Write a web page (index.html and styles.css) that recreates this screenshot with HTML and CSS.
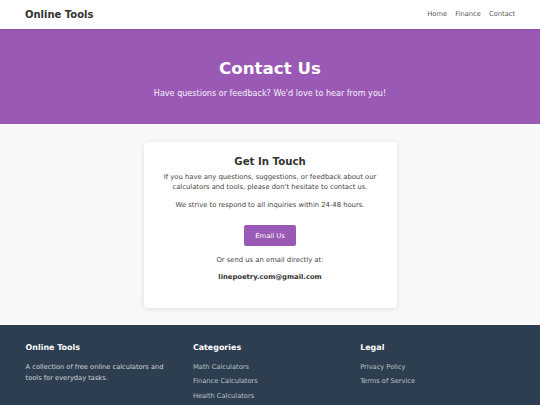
FILE: index.html
```html
<!DOCTYPE html>
<html lang="en">
<head>
<meta charset="utf-8">
<title>Contact Us - Online Tools</title>
<link rel="stylesheet" href="styles.css">
</head>
<body>
<header class="site-header">
  <div class="logo">Online Tools</div>
  <nav class="nav">
    <a href="#">Home</a>
    <a href="#">Finance</a>
    <a href="#">Contact</a>
  </nav>
</header>
<section class="hero">
  <h1>Contact Us</h1>
  <p>Have questions or feedback? We'd love to hear from you!</p>
</section>
<main class="main">
  <div class="card">
    <h2>Get In Touch</h2>
    <p class="intro">If you have any questions, suggestions, or feedback about our calculators and tools, please don't hesitate to contact us.</p>
    <p class="note">We strive to respond to all inquiries within 24-48 hours.</p>
    <a class="btn" href="#">Email Us</a>
    <p class="or">Or send us an email directly at:</p>
    <p class="email">linepoetry.com@gmail.com</p>
  </div>
</main>
<footer class="footer">
  <div class="footer-grid">
    <div class="col">
      <h3>Online Tools</h3>
      <p>A collection of free online calculators and tools for everyday tasks.</p>
    </div>
    <div class="col">
      <h3>Categories</h3>
      <ul>
        <li><a href="#">Math Calculators</a></li>
        <li><a href="#">Finance Calculators</a></li>
        <li><a href="#">Health Calculators</a></li>
      </ul>
    </div>
    <div class="col">
      <h3>Legal</h3>
      <ul>
        <li><a href="#">Privacy Policy</a></li>
        <li><a href="#">Terms of Service</a></li>
      </ul>
    </div>
  </div>
</footer>
</body>
</html>
```
FILE: styles.css
```css
* { box-sizing: border-box; }
html, body { margin: 0; padding: 0; }
body {
  font-family: "DejaVu Sans", Verdana, sans-serif;
  color: #333;
  background: #f8f8f8;
}
a { text-decoration: none; }

.site-header {
  height: 28.7px;
  padding: 0 25px;
  background: #fff;
  display: flex;
  align-items: center;
  justify-content: space-between;
  box-shadow: 0 1px 2px rgba(0,0,0,0.12);
  position: relative;
  z-index: 1;
}
.logo {
  font-size: 10px;
  font-weight: bold;
  color: #333;
}
.nav { display: flex; gap: 8.3px; }
.nav a {
  font-size: 6.67px;
  color: #555;
}

.hero {
  background: #9b59b6;
  color: #fff;
  text-align: center;
  padding: 30.7px 20px 24.2px;
}
.hero h1 {
  margin: 0;
  font-size: 16.67px;
  line-height: 20px;
  font-weight: bold;
}
.hero p {
  margin: 8.8px 0 0;
  font-size: 8.07px;
  line-height: 12px;
  opacity: 0.92;
}

.main {
  padding: 17.5px 20px 17.2px;
  display: flex;
  justify-content: center;
}
.card {
  width: 253px;
  background: #fff;
  border-radius: 4px;
  box-shadow: 0 1px 5px rgba(0,0,0,0.1);
  padding: 14.5px 16px 25.6px;
  text-align: center;
  color: #444;
}
.card h2 {
  margin: 0 0 4px;
  font-size: 10.2px;
  line-height: 12px;
  color: #333;
}
.card p {
  margin: 0;
  font-size: 6.8px;
  line-height: 10px;
}
.card .note { margin-top: 8px; }
.btn {
  display: inline-block;
  margin-top: 15px;
  background: #9b59b6;
  color: #fff;
  font-size: 6.75px;
  line-height: 10px;
  padding: 5.35px 11px;
  border-radius: 2px;
}
.card .or { margin-top: 9.3px; }
.card .email {
  margin-top: 6.7px;
  font-weight: bold;
  color: #333;
}

.footer {
  background: #2c3e50;
  color: #bdc3c7;
  padding: 18.6px 25px 20px;
}
.footer-grid {
  display: grid;
  grid-template-columns: repeat(3, 141.7px);
  column-gap: 25.6px;
  padding-left: 0.6px;
}
.footer h3 {
  margin: 0 0 9.5px;
  font-size: 7.95px;
  line-height: 9.4px;
  color: #fff;
}
.footer p {
  margin: 0;
  font-size: 6.67px;
  line-height: 10.67px;
  color: #d0d5d9;
}
.footer ul { list-style: none; margin: 0; padding: 0; }
.footer li { margin-bottom: 3.5px; }
.footer li a {
  font-size: 6.67px;
  line-height: 10.67px;
  color: #bdc3c7;
  display: block;
}
```
